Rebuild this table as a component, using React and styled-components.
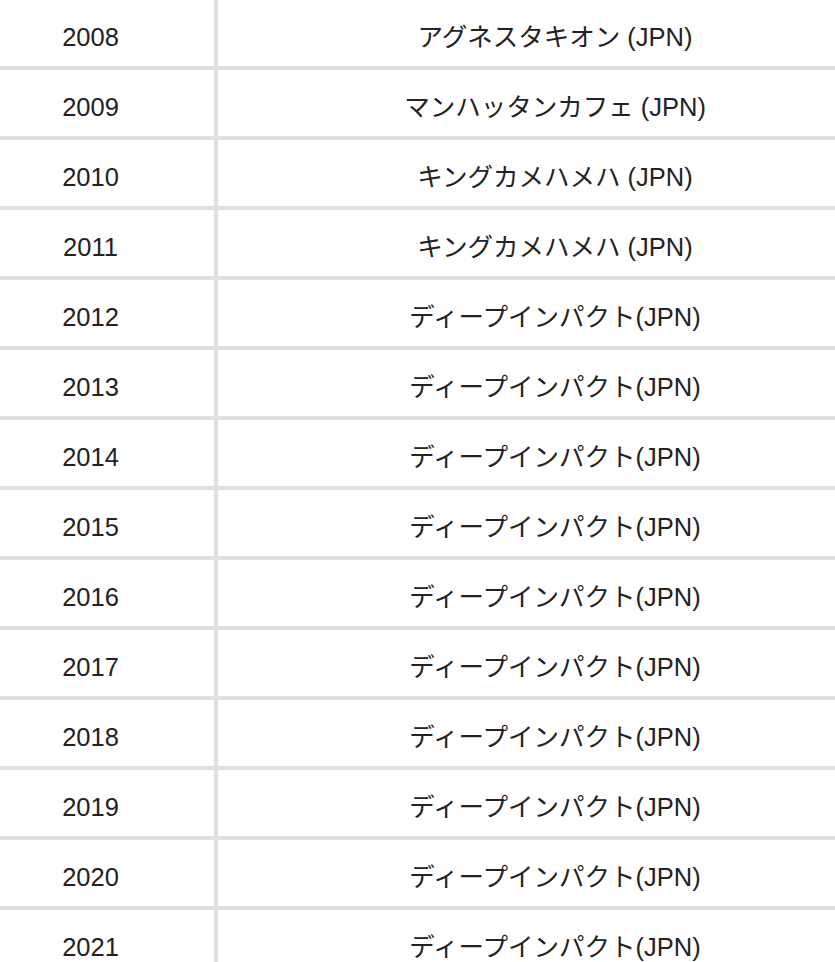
import React from 'react';
import styled, { createGlobalStyle } from 'styled-components';

const GlobalStyle = createGlobalStyle`
  html, body {
    margin: 0;
    padding: 0;
    background: #fff;
    overflow: hidden;
  }
`;

const Frame = styled.div`
  width: 835px;
  overflow: hidden;
`;

const Table = styled.div`
  width: 925px;
  margin-left: -33px;
  font-family: "Liberation Sans", "Noto Sans CJK JP", sans-serif;
  font-size: 25.5px;
  line-height: 30px;
  color: #222;
`;

const Row = styled.div`
  display: grid;
  grid-template-columns: 251px 674px;
  height: 70px;
  box-sizing: border-box;
  border-bottom: 4px solid #e0e0e0;
`;

const Cell = styled.div`
  display: flex;
  align-items: center;
  justify-content: center;
  padding-top: 8px;
  box-sizing: border-box;
  border-right: ${({ $divider }) => ($divider ? '4px solid #e0e0e0' : 'none')};
  white-space: nowrap;
`;

const winners = [
  ['2008', 'アグネスタキオン (JPN)'],
  ['2009', 'マンハッタンカフェ (JPN)'],
  ['2010', 'キングカメハメハ (JPN)'],
  ['2011', 'キングカメハメハ (JPN)'],
  ['2012', 'ディープインパクト(JPN)'],
  ['2013', 'ディープインパクト(JPN)'],
  ['2014', 'ディープインパクト(JPN)'],
  ['2015', 'ディープインパクト(JPN)'],
  ['2016', 'ディープインパクト(JPN)'],
  ['2017', 'ディープインパクト(JPN)'],
  ['2018', 'ディープインパクト(JPN)'],
  ['2019', 'ディープインパクト(JPN)'],
  ['2020', 'ディープインパクト(JPN)'],
  ['2021', 'ディープインパクト(JPN)'],
];

export default function App() {
  return (
    <>
      <GlobalStyle />
      <Frame>
        <Table>
          {winners.map(([year, sire]) => (
            <Row key={year}>
              <Cell $divider>{year}</Cell>
              <Cell>{sire}</Cell>
            </Row>
          ))}
        </Table>
      </Frame>
    </>
  );
}
